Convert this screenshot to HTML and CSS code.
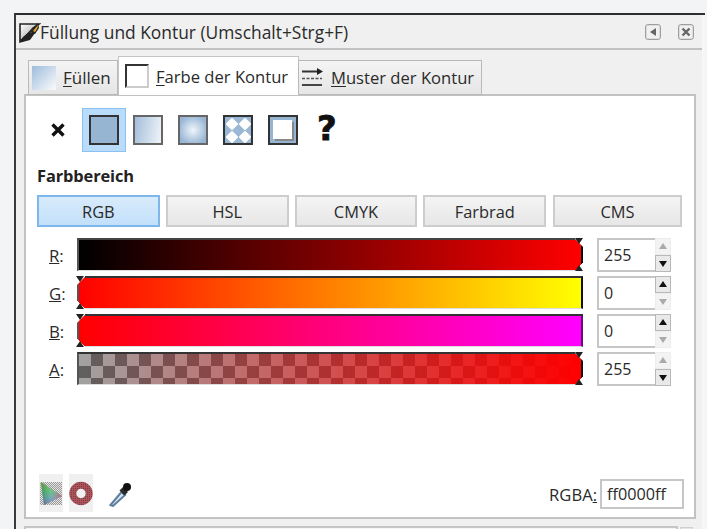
FILE: index.html
```html
<!DOCTYPE html>
<html lang="de">
<head>
<meta charset="utf-8">
<title>Füllung und Kontur</title>
<link rel="stylesheet" href="styles.css">
</head>
<body>
<div class="dialog">
  <header class="titlebar">
    <svg class="title-icon" width="24" height="24" viewBox="0 0 24 24">
      <defs><linearGradient id="tg" x1="0" y1="0" x2="1" y2="1"><stop offset="0" stop-color="#fff"/><stop offset="1" stop-color="#999"/></linearGradient></defs>
      <path d="M3 4H22L16 8L9 16L3 21Z" fill="url(#tg)" stroke="#222" stroke-width="1.6"/>
      <path d="M2 23L13 20L18 13L12 12L6 17Z" fill="#222"/>
      <path d="M13 12L21 3L22 8L18 14Z" fill="#222"/>
      <path d="M16 11L21 5L20.5 8L18 12Z" fill="#e8a92c"/>
    </svg>
    <span class="title-text">Füllung und Kontur (Umschalt+Strg+F)</span>
    <span class="title-btn">
      <svg width="16" height="16" viewBox="0 0 16 16"><rect x=".7" y=".7" width="14.6" height="14.6" rx="2" fill="#f0f0f0" stroke="#8a8a8a"/><path d="M11 4V12L5 8Z" fill="#666"/></svg>
    </span>
    <span class="title-btn">
      <svg width="16" height="16" viewBox="0 0 16 16"><rect x=".7" y=".7" width="14.6" height="14.6" rx="2" fill="#f0f0f0" stroke="#8a8a8a"/><path d="M4.5 4.5L11.5 11.5M11.5 4.5L4.5 11.5" stroke="#666" stroke-width="2.4"/></svg>
    </span>
  </header>

  <div class="tabs-area">
    <div class="tabs">
      <div class="tab tab-fill"><span class="swatch swatch-fill"></span><span class="tab-label"><u>F</u>üllen</span></div>
      <div class="tab tab-active"><span class="swatch swatch-stroke"></span><span class="tab-label"><u>F</u>arbe der Kontur</span></div>
      <div class="tab tab-pattern">
        <svg class="pattern-icon" width="24" height="22" viewBox="0 0 24 22">
          <path d="M2 4.5H19" stroke="#333" stroke-width="2"/><path d="M17 1L23 4.5L17 8Z" fill="#222"/>
          <path d="M2 11.5H22" stroke="#555" stroke-width="1.6" stroke-dasharray="3 1.5"/>
          <path d="M2 18H22" stroke="#444" stroke-width="2"/>
        </svg>
        <span class="tab-label"><u>M</u>uster der Kontur</span>
      </div>
    </div>

    <div class="panel">
      <div class="paint-row">
        <span class="paint-none">
          <svg width="16" height="16" viewBox="0 0 16 16"><path d="M2.5 2.5L13.5 13.5M13.5 2.5L2.5 13.5" stroke="#111" stroke-width="3.4"/></svg>
        </span>
        <span class="paint-sel"><span class="paint p-flat"></span></span>
        <span class="paint p-linear"></span>
        <span class="paint p-radial"></span>
        <span class="paint p-pattern">
          <svg width="26" height="26" viewBox="0 0 26 26">
            <rect width="26" height="26" fill="#9ab8d6"/>
            <path d="M7 2L12 7L7 12L2 7ZM20 2L25 7L20 12L15 7ZM7 15L12 20L7 25L2 20ZM20 15L25 20L20 25L15 20Z" fill="#fff" stroke="#fff" stroke-width="2" stroke-linejoin="round"/>
          </svg>
        </span>
        <span class="paint p-swatch"><span class="p-swatch-in"></span></span>
        <span class="paint-unknown">?</span>
      </div>

      <div class="section-title">Farbbereich</div>

      <div class="modes">
        <span class="mode mode-on">RGB</span>
        <span class="mode">HSL</span>
        <span class="mode">CMYK</span>
        <span class="mode">Farbrad</span>
        <span class="mode mode-wide">CMS</span>
      </div>

      <div class="sliders">
        <div class="row">
          <span class="label"><u>R</u>:</span>
          <div class="slider s-r"><span class="thumb thumb-right"></span></div>
          <span class="spin-input">255</span>
          <span class="spin"><span class="arrow up off"></span><span class="arrow down on"></span></span>
        </div>
        <div class="row">
          <span class="label"><u>G</u>:</span>
          <div class="slider s-g"><span class="thumb thumb-left"></span></div>
          <span class="spin-input">0</span>
          <span class="spin"><span class="arrow up on"></span><span class="arrow down off"></span></span>
        </div>
        <div class="row">
          <span class="label"><u>B</u>:</span>
          <div class="slider s-b"><span class="thumb thumb-left"></span></div>
          <span class="spin-input">0</span>
          <span class="spin"><span class="arrow up on"></span><span class="arrow down off"></span></span>
        </div>
        <div class="row">
          <span class="label"><u>A</u>:</span>
          <div class="slider s-a"><span class="thumb thumb-right"></span></div>
          <span class="spin-input">255</span>
          <span class="spin"><span class="arrow up off"></span><span class="arrow down on"></span></span>
        </div>
      </div>

      <div class="bottom">
        <span class="tool">
          <svg width="24" height="38" viewBox="0 0 24 38">
            <defs>
              <pattern id="ck" width="2" height="2" patternUnits="userSpaceOnUse"><rect width="2" height="2" fill="#e4e4e4"/><rect width="1" height="1" fill="#999"/><rect x="1" y="1" width="1" height="1" fill="#999"/></pattern>
              <linearGradient id="gm" x1="0" y1="0" x2="0" y2="1"><stop offset="0" stop-color="#8f9a48"/><stop offset=".4" stop-color="#40b070"/><stop offset=".75" stop-color="#5a80c8"/><stop offset="1" stop-color="#7a48b0"/></linearGradient>
              <linearGradient id="gx" x1="0" y1="0" x2="1" y2="0"><stop offset="0" stop-color="#308030" stop-opacity=".5"/><stop offset=".45" stop-color="#a0e0b0" stop-opacity=".4"/><stop offset="1" stop-color="#e05070" stop-opacity=".8"/></linearGradient>
            </defs>
            <rect x="1" y="8" width="22" height="23" fill="url(#ck)"/>
            <path d="M2 8L23 22L5 31Z" fill="url(#gm)"/>
            <path d="M2 8L23 22L5 31Z" fill="url(#gx)"/>
          </svg>
        </span>
        <span class="tool">
          <svg width="24" height="38" viewBox="0 0 24 38">
            <defs><pattern id="rd" width="2" height="2" patternUnits="userSpaceOnUse"><rect width="2" height="2" fill="#b0525a"/><rect width="1" height="1" fill="#6e4046"/></pattern></defs>
            <circle cx="12" cy="19.5" r="8.2" fill="none" stroke="url(#rd)" stroke-width="7"/>
          </svg>
        </span>
        <svg class="dropper" width="24" height="26" viewBox="0 0 24 26">
          <path d="M2.5 24L13.5 11L17 14L5 25Z" fill="#dbe6f0" stroke="#5f7f9f" stroke-width="2"/>
          <path d="M11.5 9.5L15 6L20 11L16.5 14.5Z" fill="#2a2a2a"/>
          <circle cx="19" cy="6" r="4" fill="#111"/>
        </svg>
        <span class="grow"></span>
        <span class="rgba-label">RGBA<u>:</u></span>
        <span class="rgba-input">ff0000ff</span>
      </div>
    </div>
  </div>
  <div class="next-row">
    <div class="next-panel"></div>
    <div class="next-box"></div>
  </div>
</div>
</body>
</html>
```

FILE: styles.css
```css
* { box-sizing: border-box; }
html, body { margin: 0; height: 100%; }
body {
  width: 707px;
  height: 529px;
  overflow: hidden;
  background: #f3f4f6;
  padding: 13px 2px 0 14px;
  font-family: "Open Sans", "Noto Sans", sans-serif;
  font-size: 16.8px;
  color: #2a2a2a;
}
.dialog {
  height: 516px;
  overflow: hidden;
  background: linear-gradient(#f0f0f0, #f0f0f0) 0 0 / calc(100% - 3px) 100% no-repeat, #f7f7f7;
  border-top: 2px solid #2e2e2e;
  border-left: 2px solid #3a3a3a;
  padding-right: 3px;
  display: flex;
  flex-direction: column;
}
.titlebar {
  height: 35px;
  flex: none;
  display: flex;
  align-items: center;
  padding: 0 8px 0 1px;
  border-bottom: 2px solid #c2c2c2;
}
.title-icon { flex: none; margin-right: -1px; }
.title-text { flex: 1; font-size: 17.4px; white-space: nowrap; }
.title-btn { width: 16px; height: 16px; margin-left: 17px; display: block; }
.title-btn svg { display: block; }

.tabs-area { padding: 7px 6px 0 8px; flex: none; }
.tabs { display: flex; align-items: flex-end; padding-left: 4px; height: 38px; position: relative; z-index: 1; margin-bottom: -1px; }
.tab {
  height: 35px;
  border: 1px solid #b9b9b9;
  background: linear-gradient(#f4f4f4, #e6e6e6);
  display: flex;
  align-items: center;
  white-space: nowrap;
}
.tab u { text-underline-offset: 2px; }
.tab-fill { width: 90px; padding-left: 3px; }
.tab-active { width: 181px; height: 39px; background: #fff; border-color: #c4c4c4; border-bottom: 0; padding-left: 6px; }
.tab-pattern { width: 184px; padding-left: 1px; margin-left: -1px; }
.swatch { width: 24px; height: 24px; flex: none; display: block; }
.swatch-fill { background: linear-gradient(135deg, #9dbbdb, #f2f6fa 90%); margin-right: 7px; }
.swatch-stroke { border: 2px solid; border-color: #333 #ccc #ccc #333; margin-right: 7px; background: #fff; }
.pattern-icon { flex: none; margin-right: 7px; display: block; }
.tab-label { display: block; font-size: 16.6px; }
.tab-fill .tab-label { font-size: 17px; }

.panel {
  height: 425px;
  background: #fff;
  border: 2px solid #c2c2c2;
  padding: 0 12px 0 11px;
  display: flex;
  flex-direction: column;
}
.paint-row { display: flex; align-items: center; height: 46px; margin-top: 11px; padding-left: 12px; flex: none; }
.paint-none { width: 33px; display: block; height: 16px; padding-left: 1px; }
.paint-none svg { display: block; }
.paint-sel {
  width: 44px; height: 44px;
  background: #b9dcfb;
  border: 1px solid #8cc0f0;
  display: flex; align-items: center; justify-content: center;
  margin-right: 7px;
}
.paint { width: 30px; height: 30px; display: block; border: 2px solid #333; flex: none; margin-right: 15px; overflow: hidden; }
.paint svg { display: block; }
.paint-sel .paint { margin: 0; }
.p-flat { background: #96b5d3; }
.p-linear { background: linear-gradient(100deg, #a3bedb, #f0f4f9); border-color: #666; }
.p-radial { background: radial-gradient(circle, #f0f5fa, #98b6d5 80%); border-color: #666; }
.p-swatch { background: #96b5d3; padding: 3px 4px 4px 3px; }
.p-swatch-in { display: block; width: 100%; height: 100%; background: #fff; box-shadow: 2px 2px 0 #888; }
.paint-unknown {
  font-family: "DejaVu Sans", sans-serif; font-weight: 700; font-size: 34px; line-height: 34px;
  color: #111; -webkit-text-stroke: .8px #111;
  margin-left: 4px; display: block; height: 34px; margin-top: -4px;
}

.section-title { font-weight: 700; font-size: 16.4px; margin-top: 11px; line-height: 24px; height: 24px; flex: none; color: #222; letter-spacing: -.1px; }
.modes { display: flex; gap: 6px; margin-top: 7px; flex: none; }
.mode {
  width: 123px; height: 32px;
  border: 2px solid #cdcdcd;
  background: linear-gradient(#f4f4f4, #e7e7e7);
  display: flex; align-items: center; justify-content: center;
  font-size: 16.4px;
}
.mode-on { background: linear-gradient(#d9ebfb, #c2e0fa); border-color: #7db7ec; }
.mode-wide { width: 129px; margin-left: 1px; }

.sliders { margin-top: 11px; display: flex; flex-direction: column; gap: 5px; flex: none; }
.row { display: flex; align-items: flex-start; height: 33px; }
.label { width: 40px; padding-left: 12px; font-size: 16.8px; line-height: 35px; flex: none; }
.slider {
  width: 506px; height: 33px; flex: none; position: relative;
  border-top: 2px solid #333;
  border-left: 2px solid #555;
  border-bottom: 1px solid #ddd;
  border-right: 2px solid #111;
}
.s-r { background: linear-gradient(90deg, #000, #f00); border-top-color: #444; border-right-color: #000; }
.s-g { background: linear-gradient(90deg, #f00, #ff0); }
.s-b { background: linear-gradient(90deg, #f00, #f0f); border-right-color: #601070; }
.s-a {
  background:
    linear-gradient(90deg, rgba(255,0,0,0), #f00),
    repeating-conic-gradient(#606060 0 25%, #a2a2a2 0 50%) 0 0 / 24px 24px;
}
.thumb { position: absolute; top: -2px; bottom: -1px; width: 9px; display: block; }
.thumb::before, .thumb::after {
  content: ""; position: absolute; width: 0; height: 0;
  border-left: 4px solid transparent; border-right: 4px solid transparent;
}
.thumb::before { top: 0; border-top: 6px solid #222; }
.thumb::after { bottom: 0; border-bottom: 6px solid #222; }
.thumb-right { right: -3px; background:
  linear-gradient(225deg, #fff 0 38%, transparent 40%) 0 0 / 100% 50% no-repeat,
  linear-gradient(315deg, #fff 0 38%, transparent 40%) 0 100% / 100% 50% no-repeat; }
.thumb-left { left: -3px; background:
  linear-gradient(135deg, #fff 0 38%, transparent 40%) 0 0 / 100% 50% no-repeat,
  linear-gradient(45deg, #fff 0 38%, transparent 40%) 0 100% / 100% 50% no-repeat; }

.spin-input {
  width: 58px; height: 34px; flex: none; margin-left: 14px;
  border: 2px solid #c6c6c6; border-right: 0;
  padding-left: 5px; line-height: 30px; font-size: 16px;
  background: #fff;
}
.spin { width: 16px; height: 34px; flex: none; display: flex; flex-direction: column; }
.arrow { height: 17px; display: block; position: relative; border: 1px solid #ededed; background: #f3f3f3; }
.arrow.on { border: 1px solid #b8b8b8; background: #e9e9e9; }
.arrow::after { content: ""; position: absolute; left: 3px; border-left: 4px solid transparent; border-right: 4px solid transparent; }
.up::after { top: 4px; border-bottom: 6px solid #111; }
.down::after { top: 5px; border-top: 6px solid #111; }
.up.off::after { border-bottom-color: #aaa; }
.down.off::after { border-top-color: #aaa; }

.bottom { margin-top: auto; margin-bottom: 3px; height: 40px; display: flex; align-items: center; flex: none; }
.tool { width: 24px; height: 38px; background: #f0f0f0; display: block; margin-right: 6px; margin-left: 2px; flex: none; margin-top: -2px; }
.tool + .tool { margin-left: 0; }
.tool svg { display: block; }
.dropper { margin-left: 9px; flex: none; }
.grow { flex: 1; }
.rgba-label { font-size: 16.6px; margin-right: 3px; }
.rgba-input { width: 84px; height: 30px; border: 2px solid #c6c6c6; padding-left: 5px; line-height: 26px; font-size: 16.2px; background: #fff; margin-right: -2px; }

.next-row { display: flex; gap: 2px; margin: 7px 9px 0 8px; flex: none; }
.next-panel { height: 30px; flex: 1; border: 2px solid #c6c6c6; background: #f5f5f5; }
.next-box { width: 13px; height: 30px; margin-top: 1px; background: #e4e4e4; border: 1px solid #d0d0d0; }
```
